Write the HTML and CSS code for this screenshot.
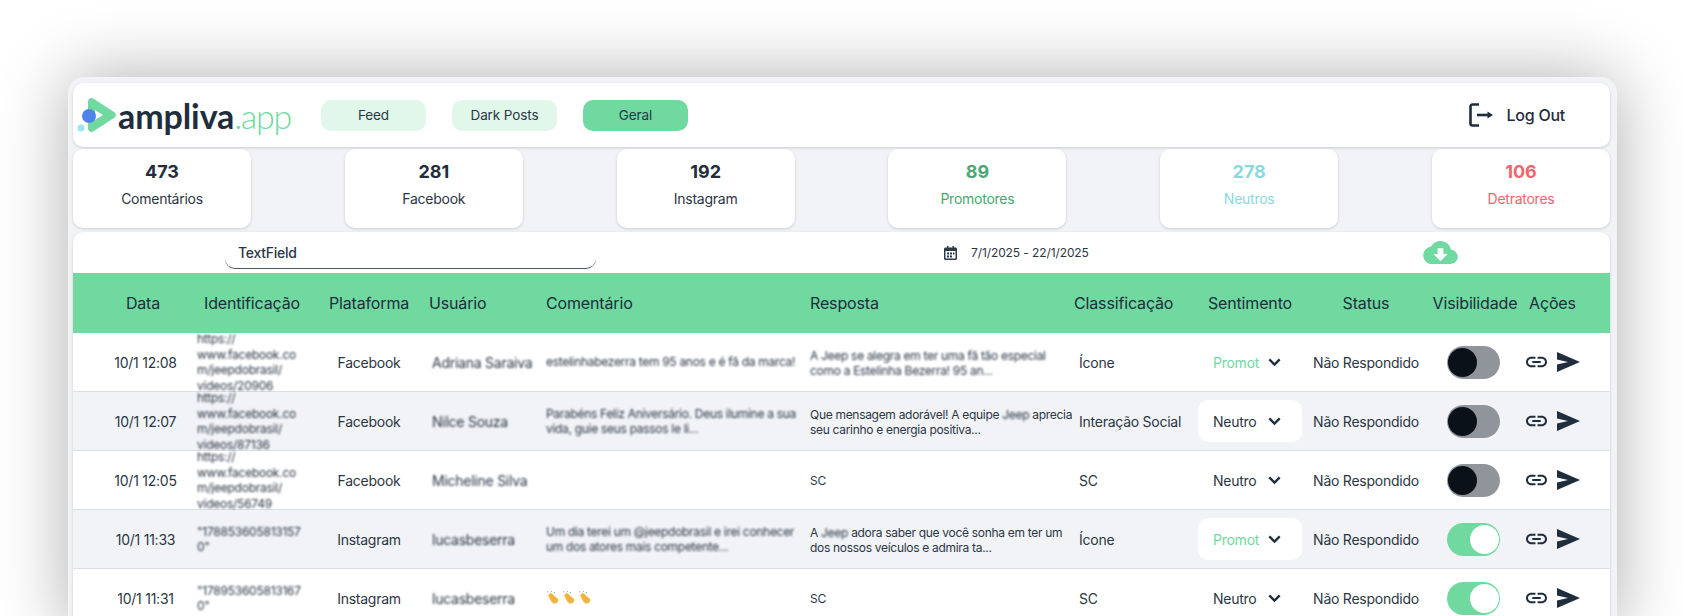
FILE: index.html
```html
<!DOCTYPE html>
<html lang="pt-BR">
<head>
  <meta charset="UTF-8" />
  <meta name="viewport" content="width=device-width, initial-scale=1.0" />
  <title>Ampliva - Comentários</title>
  <link rel="stylesheet" href="styles.css">
</head>
<body>
  <svg class="sprite" width="0" height="0">
    <symbol id="i-link" viewBox="2 7 20 10"><path d="M3.9 12c0-1.71 1.39-3.1 3.1-3.1h4V7H7c-2.76 0-5 2.24-5 5s2.24 5 5 5h4v-1.9H7c-1.71 0-3.1-1.39-3.1-3.1zM8 13h8v-2H8v2zm9-6h-4v1.9h4c1.71 0 3.1 1.39 3.1 3.1s-1.39 3.1-3.1 3.1h-4V17h4c2.76 0 5-2.24 5-5s-2.24-5-5-5z"/></symbol>
    <symbol id="i-send" viewBox="0 0 23 20"><path d="M0 0 23 10 0 20 0 12.5 11 10 0 7.5z"/></symbol>
    <symbol id="i-chevron" viewBox="0 0 12 8"><path d="M1.2 1.2 6 6l4.8-4.8" fill="none" stroke="currentColor" stroke-width="2.2"/></symbol>
    <symbol id="i-clap" viewBox="0 0 14 14"><path d="M2 4 5 2l7 6c1 2-1 5-4 4.500-2-.5-3-2-6-8.500z" fill="#eeb43f"/><path d="M5 1 6 0M8 2l1-1M2 1 1.500 0" stroke="#8a9aa8" stroke-width=".8"/></symbol>
  </svg>

  <div class="frame">
    <header class="nav card">
      <a class="logo">
        <svg class="logo-mark" width="50" height="46" viewBox="0 0 50 46">
          <path d="M12 10c0-3.500 3-5 6-3l20 13c2.500 1.700 2.500 4.300 0 6L18 39c-3 2-6 .5-6-3zM19 18v10l8-5z" fill="#6fd9a0" fill-rule="evenodd"/>
          <circle cx="13" cy="24" r="7" fill="#4d86e8"/>
          <circle cx="5" cy="36" r="3.500" fill="#98e6ee"/>
        </svg>
        <span class="logo-text">ampliva<span class="logo-app">.app</span></span>
      </a>
      <nav class="tabs">
        <button class="tab">Feed</button>
        <button class="tab">Dark Posts</button>
        <button class="tab active">Geral</button>
      </nav>
      <a class="logout">
        <svg width="24" height="24" viewBox="0 0 24 24" fill="none" stroke="#1f2d3d" stroke-width="2.600">
          <path d="M10 1.500H3.500a2 2 0 0 0-2 2v17a2 2 0 0 0 2 2H10"/>
          <path d="M8 12h12"/>
          <path d="M18.500 8.500 24 12l-5.500 3.500z" fill="#1f2d3d" stroke="none"/>
        </svg>
        Log Out
      </a>
    </header>

    <section class="stats">
      <div class="stat card"><strong>473</strong><span>Comentários</span></div>
      <div class="stat card"><strong>281</strong><span>Facebook</span></div>
      <div class="stat card"><strong>192</strong><span>Instagram</span></div>
      <div class="stat card promotores"><strong>89</strong><span>Promotores</span></div>
      <div class="stat card neutros"><strong>278</strong><span>Neutros</span></div>
      <div class="stat card detratores"><strong>106</strong><span>Detratores</span></div>
    </section>

    <section class="painel card">
      <div class="toolbar">
        <div class="textfield">TextField</div>
        <div class="periodo">
          <svg width="13" height="14" viewBox="0 0 13 14" fill="#2f3a48"><path d="M1.500 1.500H3V0h1.500v1.500h4V0H10v1.500h1.500c.8 0 1.500.7 1.500 1.500v9.500c0 .8-.7 1.500-1.500 1.500h-10C.7 14 0 13.300 0 12.500V3c0-.8.700-1.500 1.500-1.500zM1.500 5v7.500h10V5zM3 6.500h2v2H3zm3 0h2v2H6zm3 0h1.500v2H9zm-6 3h2v2H3zm3 0h2v2H6z"/></svg>
          <span>7/1/2025 - 22/1/2025</span>
        </div>
        <svg class="nuvem" width="35" height="23" viewBox="0 4 24 16" fill="#6fd9a0"><path d="M19.350 10.040C18.670 6.590 15.640 4 12 4 9.110 4 6.600 5.640 5.350 8.040 2.340 8.360 0 10.910 0 14c0 3.310 2.690 6 6 6h13c2.760 0 5-2.240 5-5 0-2.640-2.050-4.780-4.650-4.960zM17 13l-5 5-5-5h3V9h4v4h3z"/></svg>
      </div>

      <div class="linha topo">
        <div class="col-data">Data</div>
        <div class="col-id">Identificação</div>
        <div class="col-plat">Plataforma</div>
        <div class="col-user">Usuário</div>
        <div class="col-com">Comentário</div>
        <div class="col-resp">Resposta</div>
        <div class="col-class">Classificação</div>
        <div class="col-sent">Sentimento</div>
        <div class="col-status">Status</div>
        <div class="col-vis">Visibilidade</div>
        <div class="col-acoes">Ações</div>
      </div>

      <div class="linha">
        <div class="col-data">10/1 12:08</div>
        <div class="col-id borrado">https://<br>www.facebook.co<br>m/jeepdobrasil/<br>videos/20906</div>
        <div class="col-plat">Facebook</div>
        <div class="col-user borrado">Adriana Saraiva</div>
        <div class="col-com borrado">estelinhabezerra tem 95 anos e é fã da marca!</div>
        <div class="col-resp"><span class="borrado">A Jeep se alegra em ter uma fã tão especial como a Estelinha Bezerra! 95 an...</span></div>
        <div class="col-class">Ícone</div>
        <div class="col-sent"><div class="select promot">Promot <svg><use href="#i-chevron"/></svg></div></div>
        <div class="col-status">Não Respondido</div>
        <div class="col-vis"><div class="toggle"></div></div>
        <div class="col-acoes"><svg class="ic-link"><use href="#i-link"/></svg><svg class="ic-send"><use href="#i-send"/></svg></div>
      </div>

      <div class="linha">
        <div class="col-data">10/1 12:07</div>
        <div class="col-id borrado">https://<br>www.facebook.co<br>m/jeepdobrasil/<br>videos/87136</div>
        <div class="col-plat">Facebook</div>
        <div class="col-user borrado">Nilce Souza</div>
        <div class="col-com borrado">Parabéns Feliz Aniversário. Deus ilumine a sua vida, guie seus passos le li...</div>
        <div class="col-resp">Que mensagem adorável! A equipe <span class="borrado">Jeep</span> aprecia seu carinho e energia positiva...</div>
        <div class="col-class">Interação Social</div>
        <div class="col-sent"><div class="select">Neutro <svg><use href="#i-chevron"/></svg></div></div>
        <div class="col-status">Não Respondido</div>
        <div class="col-vis"><div class="toggle"></div></div>
        <div class="col-acoes"><svg class="ic-link"><use href="#i-link"/></svg><svg class="ic-send"><use href="#i-send"/></svg></div>
      </div>

      <div class="linha">
        <div class="col-data">10/1 12:05</div>
        <div class="col-id borrado">https://<br>www.facebook.co<br>m/jeepdobrasil/<br>videos/56749</div>
        <div class="col-plat">Facebook</div>
        <div class="col-user borrado">Micheline Silva</div>
        <div class="col-com"></div>
        <div class="col-resp">SC</div>
        <div class="col-class">SC</div>
        <div class="col-sent"><div class="select">Neutro <svg><use href="#i-chevron"/></svg></div></div>
        <div class="col-status">Não Respondido</div>
        <div class="col-vis"><div class="toggle"></div></div>
        <div class="col-acoes"><svg class="ic-link"><use href="#i-link"/></svg><svg class="ic-send"><use href="#i-send"/></svg></div>
      </div>

      <div class="linha">
        <div class="col-data">10/1 11:33</div>
        <div class="col-id borrado">"178853605813157<br>0"</div>
        <div class="col-plat">Instagram</div>
        <div class="col-user borrado">lucasbeserra</div>
        <div class="col-com borrado">Um dia terei um @jeepdobrasil e irei conhecer um dos atores mais competente...</div>
        <div class="col-resp">A <span class="borrado">Jeep</span> adora saber que você sonha em ter um dos nossos veículos e admira ta...</div>
        <div class="col-class">Ícone</div>
        <div class="col-sent"><div class="select promot">Promot <svg><use href="#i-chevron"/></svg></div></div>
        <div class="col-status">Não Respondido</div>
        <div class="col-vis"><div class="toggle on"></div></div>
        <div class="col-acoes"><svg class="ic-link"><use href="#i-link"/></svg><svg class="ic-send"><use href="#i-send"/></svg></div>
      </div>

      <div class="linha">
        <div class="col-data">10/1 11:31</div>
        <div class="col-id borrado">"178953605813167<br>0"</div>
        <div class="col-plat">Instagram</div>
        <div class="col-user borrado">lucasbeserra</div>
        <div class="col-com palmas"><svg><use href="#i-clap"/></svg><svg><use href="#i-clap"/></svg><svg><use href="#i-clap"/></svg></div>
        <div class="col-resp">SC</div>
        <div class="col-class">SC</div>
        <div class="col-sent"><div class="select">Neutro <svg><use href="#i-chevron"/></svg></div></div>
        <div class="col-status">Não Respondido</div>
        <div class="col-vis"><div class="toggle on"></div></div>
        <div class="col-acoes"><svg class="ic-link"><use href="#i-link"/></svg><svg class="ic-send"><use href="#i-send"/></svg></div>
      </div>
    </section>
  </div>
</body>
</html>
```

FILE: styles.css
```css
html, body {
  height: 616px;
  overflow: hidden;
}

body {
  margin: 0;
  background: #fff;
  font-family: Inter, "Noto Sans", sans-serif;
  font-size: 14px;
  letter-spacing: -0.25px;
  color: #2b3644;
}

.sprite {
  position: absolute;
}

.frame {
  margin: 77px 66px 0 68px;
  padding: 6px 7px 6px 5px;
  background: #f1f3f7;
  border-radius: 16px;
  box-shadow: 0 0 70px rgba(0, 0, 0, 0.32);
}

.card {
  background: #fff;
  border-radius: 10px;
  box-shadow: 0 1px 3px rgba(0, 0, 0, 0.16);
}

/* topo */
.nav {
  display: flex;
  align-items: center;
  height: 64px;
}

.logo {
  display: flex;
  align-items: center;
  width: 248px;
}

.logo-mark {
  margin-left: 3px;
  margin-right: -8px;
}

.logo-text {
  font-family: Lato, sans-serif;
  font-size: 34px;
  font-weight: 700;
  letter-spacing: -0.1px;
  color: #1f2d3d;
}

.logo-app {
  font-weight: 300;
  letter-spacing: -1.3px;
  color: #6fd9a0;
}

.tabs {
  display: flex;
  gap: 26px;
}

.tab {
  width: 105px;
  height: 31px;
  border: none;
  border-radius: 10px;
  background: #e0f7ea;
  color: #2b3644;
  font-family: inherit;
  font-size: 13.500px;
  letter-spacing: -0.1px;
}

.tab.active {
  background: #6fd9a0;
}

.logout {
  display: flex;
  align-items: center;
  gap: 14px;
  margin-left: auto;
  margin-right: 45px;
  font-size: 16px;
  font-weight: 500;
  color: #1f2d3d;
}

/* numeros */
.stats {
  display: flex;
  justify-content: space-between;
  margin: 2px 0 4px;
}

.stat {
  display: flex;
  flex-direction: column;
  align-items: center;
  width: 178px;
  height: 79px;
  padding-top: 11px;
  box-sizing: border-box;
}

.stat strong {
  font-size: 18px;
  line-height: 24px;
  letter-spacing: 0;
  color: #1f2d3d;
}

.stat span {
  margin-top: 5px;
  line-height: 20px;
  font-size: 14px;
}

.promotores strong, .promotores span { color: #47a871; }
.neutros strong, .neutros span { color: #8ad9e0; }
.detratores strong, .detratores span { color: #f0656b; }

/* tabela */
.painel {
  border-radius: 10px 10px 0 0;
}

.toolbar {
  display: grid;
  grid-template-columns: 371px 827px 1fr;
  align-items: center;
  height: 41px;
  padding-left: 152px;
}

.textfield {
  height: 32px;
  padding: 4px 13px 0;
  box-sizing: border-box;
  line-height: 24px;
  font-weight: 500;
  border-bottom: 1.500px solid #4b5563;
  border-radius: 0 0 10px 10px;
  color: #2b3644;
}

.periodo {
  display: flex;
  align-items: center;
  gap: 14px;
  margin-left: 348px;
  font-size: 12px;
  letter-spacing: -0.1px;
  white-space: nowrap;
}

.linha {
  display: grid;
  grid-template-columns: 108px 124px 96px 123px 264px 270px 124px 104px 128px 90px 1fr;
  grid-template-rows: minmax(0, 1fr);
  align-items: center;
  height: 59px;
  padding-left: 16px;
  box-sizing: border-box;
  border-bottom: 1.500px solid #dcdfe5;
}

.linha:nth-child(even) {
  background: #f1f3f7;
}

.linha.topo {
  height: 60px;
  background: #6fd9a0;
  border-bottom: none;
  font-size: 16px;
  letter-spacing: -0.15px;
  color: #1f2d3d;
}

.linha.topo > div {
  line-height: 20px;
}

.col-data, .col-plat, .col-status, .col-vis {
  text-align: center;
}

.linha:not(.topo) .col-data {
  padding-left: 5px;
}

.col-id {
  font-size: 12px;
  line-height: 15.500px;
  white-space: nowrap;
}

.topo .col-id {
  padding-left: 7px;
  font-size: 16px;
}

.col-user {
  padding-left: 15px;
  white-space: nowrap;
}

.topo .col-user {
  padding-left: 12px;
}

.col-com, .col-resp {
  padding-left: 6px;
  font-size: 12px;
  line-height: 15.500px;
}

.col-com {
  padding-right: 4px;
  letter-spacing: -0.3px;
}

.col-resp {
  margin-top: 2px;
  margin-right: -4px;
  letter-spacing: -0.3px;
}

.topo .col-com, .topo .col-resp {
  margin-top: 0;
  font-size: 16px;
  letter-spacing: -0.15px;
}

.col-class {
  padding-left: 5px;
}

.topo .col-class {
  padding-left: 0;
}

.topo .col-sent {
  text-align: center;
}

.topo .col-acoes {
  padding-left: 9px;
}

.borrado {
  filter: blur(1.200px);
}

.select {
  display: flex;
  align-items: center;
  justify-content: space-between;
  height: 42px;
  padding: 0 21px 0 15px;
  background: #fff;
  border-radius: 10px;
}

.select svg {
  width: 13px;
  height: 9px;
  color: #1f2d3d;
}

.promot {
  color: #6fd9a0;
}

.linha:not(.topo) .col-vis {
  padding-right: 4px;
}

.toggle {
  position: relative;
  width: 53px;
  height: 33px;
  margin: 0 auto;
  border-radius: 17px;
  background: #90959c;
}

.toggle::after {
  content: "";
  position: absolute;
  top: 2px;
  left: 1px;
  width: 29px;
  height: 29px;
  border-radius: 50%;
  background: #0b1118;
}

.toggle.on {
  background: #6fd9a0;
}

.toggle.on::after {
  left: 23px;
  background: #fff;
}

.col-acoes {
  display: flex;
  align-items: center;
  gap: 10px;
  padding-left: 6px;
}

.ic-link {
  width: 21px;
  height: 12px;
  fill: #1f2d3d;
}

.ic-send {
  width: 23px;
  height: 20px;
  fill: #1f2d3d;
}

.palmas {
  display: flex;
  gap: 2px;
}

.palmas svg {
  width: 14px;
  height: 14px;
}
```
